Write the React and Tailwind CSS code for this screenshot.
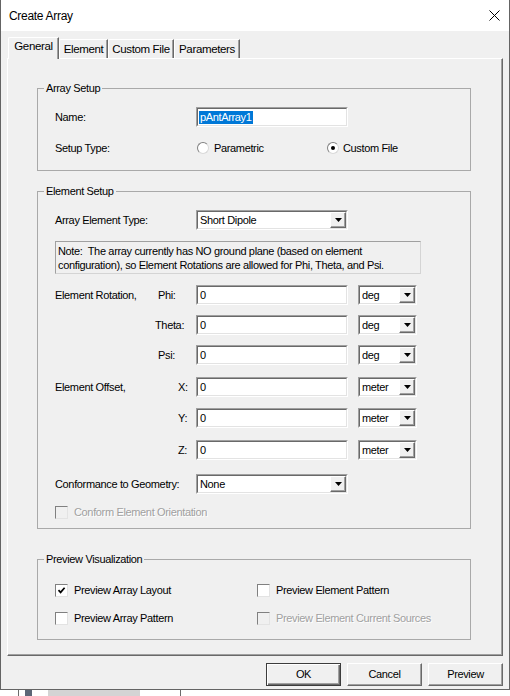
import React from "react";

const SUNKEN = "border border-t-[#a0a0a0] border-l-[#a0a0a0] border-b-white border-r-white";
const SUNKEN_IN = "border border-t-[#696969] border-l-[#696969] border-b-[#e3e3e3] border-r-[#e3e3e3]";
const RAISED =
  "border border-t-white border-l-white border-b-[#696969] border-r-[#696969] shadow-[inset_-1px_-1px_0_#a0a0a0]";

function TextBox({ value, selected }) {
  return (
    <div className={`w-[152px] h-[20px] ${SUNKEN}`}>
      <div className={`h-full bg-white flex items-center pl-[1px] ${SUNKEN_IN}`}>
        {selected ? (
          <span className="bg-[#0078d7] text-white pl-[1px] pr-[1px] leading-[13px]">{value}</span>
        ) : (
          <span className="pl-[1px]">{value}</span>
        )}
      </div>
    </div>
  );
}

function DropBtn() {
  return (
    <div className={`w-[16px] h-full bg-[#f0f0f0] flex items-center justify-center ${RAISED}`}>
      <svg width="7" height="4" viewBox="0 0 7 4">
        <polygon points="0,0 7,0 3.5,4" fill="#000" />
      </svg>
    </div>
  );
}

function Combo({ value, w }) {
  return (
    <div className={`${w} h-[20px] ${SUNKEN}`}>
      <div className={`h-full bg-white flex items-center ${SUNKEN_IN}`}>
        <span className="flex-1 pl-[2px]">{value}</span>
        <DropBtn />
      </div>
    </div>
  );
}

function Radio({ checked }) {
  return (
    <div className="w-[12px] h-[12px] rounded-full border border-t-[#808080] border-l-[#808080] border-b-[#d8d8d8] border-r-[#d8d8d8] bg-white flex items-center justify-center">
      {checked && <div className="w-[4px] h-[4px] rounded-full bg-black" />}
    </div>
  );
}

function Check({ checked, disabled, label }) {
  return (
    <div className="flex items-center gap-[6px] h-[20px]">
      <div
        className={`w-[13px] h-[13px] border border-t-[#808080] border-l-[#808080] border-b-[#e3e3e3] border-r-[#e3e3e3] flex items-center justify-center ${
          disabled ? "bg-[#f0f0f0]" : "bg-white"
        }`}
      >
        {checked && (
          <svg width="9" height="9" viewBox="0 0 9 9">
            <path d="M1.5 4.2 L3.6 6.4 L7.6 1.8" stroke="#000" strokeWidth="1.7" fill="none" />
          </svg>
        )}
      </div>
      <span className={disabled ? "text-[#a0a0a0] [text-shadow:1px_1px_0_#fff]" : ""}>{label}</span>
    </div>
  );
}

function ValueRow({ label, sub, subClass, unit, mt }) {
  return (
    <div className={`flex items-center h-[20px] ${mt}`}>
      <div className="w-[141px] flex items-center">
        <span className="w-[102px] shrink-0">{label}</span>
        <span className={subClass}>{sub}</span>
      </div>
      <TextBox value="0" />
      <div className="ml-[10px]">
        <Combo value={unit} w="w-[59px]" />
      </div>
    </div>
  );
}

function Group({ title, className, children }) {
  return (
    <fieldset className={`w-[434px] border border-[#a9a9a9] ${className}`}>
      <legend className="ml-[6px] px-[2px] leading-[13px]">{title}</legend>
      <div className="pl-[17px]">{children}</div>
    </fieldset>
  );
}

function Tab({ label, active, w }) {
  return (
    <div
      className={`${w} flex justify-center bg-[#f0f0f0] rounded-tl-[2px] border-t border-l border-r border-t-white border-l-white border-r-[#696969] shadow-[inset_-1px_0_0_#a0a0a0] text-[11.5px] ${
        active ? "h-[22px] -mb-[1px] relative z-10 items-center pb-[3px]" : "h-[19px] items-center pt-[1px]"
      }`}
    >
      {label}
    </div>
  );
}

function Btn({ label, primary }) {
  return (
    <div
      className={`w-[75px] h-[23px] bg-[#f0f0f0] flex items-center justify-center ${
        primary
          ? "border border-[#3c3c3c] shadow-[inset_1px_1px_0_#fff,inset_-1px_-1px_0_#696969,inset_-2px_-2px_0_#a0a0a0]"
          : RAISED
      }`}
    >
      {label}
    </div>
  );
}

export default function App() {
  return (
    <div className="w-[510px] h-[696px] bg-white overflow-hidden flex flex-col font-['Liberation_Sans',Arial,sans-serif] text-[11px] tracking-[-0.35px] text-black">
      <div className="h-[690px] shrink-0 flex flex-col border-l border-r border-b border-[#646464] bg-[#f0f0f0]">
        {/* title bar */}
        <div className="h-[31px] shrink-0 bg-white flex items-center justify-between pl-[8px] pr-[9px]">
          <span className="text-[12px] tracking-[-0.3px] pt-[1px]">Create Array</span>
          <svg width="11" height="11" viewBox="0 0 11 11">
            <path d="M0.5 0.5 L10.5 10.5 M10.5 0.5 L0.5 10.5" stroke="#000" strokeWidth="1" />
          </svg>
        </div>

        {/* tabs */}
        <div className="flex items-end h-[21px] mt-[6px] ml-[7px]">
          <Tab label="General" active w="w-[51px]" />
          <Tab label="Element" w="w-[49px]" />
          <Tab label="Custom File" w="w-[66px]" />
          <Tab label="Parameters" w="w-[66px]" />
        </div>

        {/* tab panel */}
        <div className="ml-[6px] w-[496px] h-[598px] shrink-0 pl-[29px] pt-[23px] border border-t-white border-l-white border-r-[#696969] border-b-[#696969] shadow-[inset_-1px_-1px_0_#a0a0a0]">
          <Group title="Array Setup" className="pb-[12px]">
            <div className="flex items-center h-[20px] mt-[12px]">
              <span className="w-[141px]">Name:</span>
              <TextBox value="pAntArray1" selected />
            </div>
            <div className="flex items-center h-[20px] mt-[11px]">
              <span className="w-[142px]">Setup Type:</span>
              <div className="w-[130px] flex items-center gap-[5px]">
                <Radio />
                <span>Parametric</span>
              </div>
              <div className="flex items-center gap-[4px]">
                <Radio checked />
                <span>Custom File</span>
              </div>
            </div>
          </Group>

          <Group title="Element Setup" className="mt-[14px] pb-[6px]">
            <div className="flex items-center h-[20px] mt-[12px]">
              <span className="w-[141px]">Array Element Type:</span>
              <Combo value="Short Dipole" w="w-[152px]" />
            </div>
            <div className="mt-[11px] w-[366px] h-[33px] border border-t-[#a0a0a0] border-l-[#a0a0a0] border-b-[#d4d4d4] border-r-[#d4d4d4] pl-[2px] pt-[2px] leading-[14px]">
              <div>Note:&nbsp; The array currently has NO ground plane (based on element</div>
              <div>configuration), so Element Rotations are allowed for Phi, Theta, and Psi.</div>
            </div>
            <ValueRow label="Element Rotation," sub="Phi:" subClass="ml-[1px]" unit="deg" mt="mt-[11px]" />
            <ValueRow label="" sub="Theta:" subClass="-ml-[2px]" unit="deg" mt="mt-[10px]" />
            <ValueRow label="" sub="Psi:" subClass="ml-[1px]" unit="deg" mt="mt-[10px]" />
            <ValueRow label="Element Offset," sub="X:" subClass="ml-[21px]" unit="meter" mt="mt-[12px]" />
            <ValueRow label="" sub="Y:" subClass="ml-[21px]" unit="meter" mt="mt-[11px]" />
            <ValueRow label="" sub="Z:" subClass="ml-[21px]" unit="meter" mt="mt-[12px]" />
            <div className="flex items-center h-[20px] mt-[14px]">
              <span className="w-[141px]">Conformance to Geometry:</span>
              <Combo value="None" w="w-[152px]" />
            </div>
            <div className="mt-[8px]">
              <Check disabled label="Conform Element Orientation" />
            </div>
          </Group>

          <Group title="Preview Visualization" className="mt-[24px] pb-[11px]">
            <div className="grid grid-cols-[202px_1fr] mt-[14px] gap-y-[8px]">
              <Check checked label="Preview Array Layout" />
              <Check label="Preview Element Pattern" />
              <Check label="Preview Array Pattern" />
              <Check disabled label="Preview Element Current Sources" />
            </div>
          </Group>
        </div>

        {/* buttons */}
        <div className="flex gap-[6px] mt-[7px] ml-[265px]">
          <Btn label="OK" primary />
          <Btn label="Cancel" />
          <Btn label="Preview" />
        </div>
      </div>

      {/* desktop behind the dialog */}
      <div className="h-[6px] flex">
        <div className="w-[18px]" />
        <div className="w-[1px] bg-[#6b6b6b]" />
        <div className="w-[6px]" />
        <div className="w-[7px] bg-[#5c6676]" />
        <div className="w-[16px]" />
        <div className="w-[92px] bg-[#d4d4d4]" />
        <div className="w-[40px]" />
        <div className="w-[1px] bg-[#6b6b6b]" />
      </div>
    </div>
  );
}
